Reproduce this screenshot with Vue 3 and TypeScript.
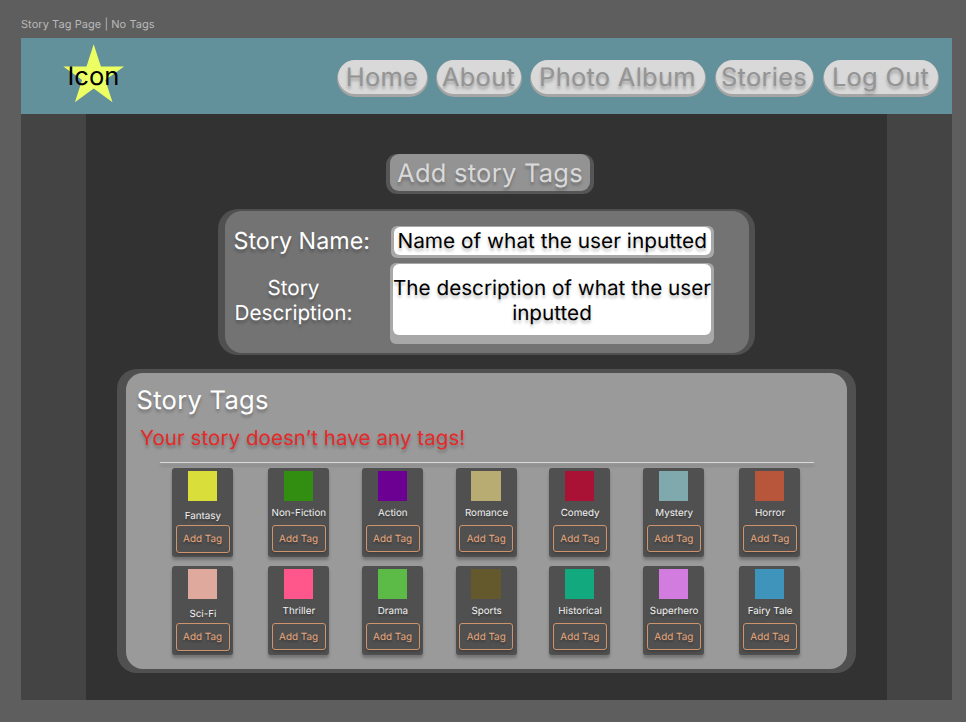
<script setup lang="ts">
interface NavItem {
  label: string
  size: string
}

interface Tag {
  name: string
  color: string
  low?: boolean
}

const navItems: NavItem[] = [
  { label: 'Home', size: 'home' },
  { label: 'About', size: 'about' },
  { label: 'Photo Album', size: 'album' },
  { label: 'Stories', size: 'stories' },
  { label: 'Log Out', size: 'logout' },
]

const tags: Tag[] = [
  { name: 'Fantasy', color: '#d9de3b', low: true },
  { name: 'Non-Fiction', color: '#328e10' },
  { name: 'Action', color: '#6b0093' },
  { name: 'Romance', color: '#b9ac72' },
  { name: 'Comedy', color: '#a91135' },
  { name: 'Mystery', color: '#7fa9ac' },
  { name: 'Horror', color: '#b8563c' },
  { name: 'Sci-Fi', color: '#dfa99d', low: true },
  { name: 'Thriller', color: '#ff568b' },
  { name: 'Drama', color: '#5cba47' },
  { name: 'Sports', color: '#64592c' },
  { name: 'Historical', color: '#12a97f' },
  { name: 'Superhero', color: '#d17cde' },
  { name: 'Fairy Tale', color: '#3e94bb' },
]
</script>

<template>
  <div class="canvas">
    <div class="frame-label">Story Tag Page | No Tags</div>
    <div class="frame">
      <header class="header">
        <div class="logo">
          <svg class="star" viewBox="0 0 64 64" width="64" height="64">
            <polygon
              points="31.7,0.3 38.9,22.4 62.1,22.4 43.3,36.1 50.5,58.2 31.7,44.5 12.9,58.2 20.1,36.1 1.3,22.4 24.5,22.4"
              fill="#ecff63"
            />
          </svg>
          <span class="logo-text">Icon</span>
        </div>
        <nav class="nav">
          <a v-for="item in navItems" :key="item.label" class="pill" :class="item.size">
            <span class="pill-face">{{ item.label }}</span>
          </a>
        </nav>
      </header>

      <main class="content">
        <h1 class="heading"><span class="heading-face">Add story Tags</span></h1>

        <section class="form">
          <div class="form-face">
            <div class="name-label">Story Name:</div>
            <div class="name-box"><div class="name-value">Name of what the user inputted</div></div>
            <div class="desc-label">Story<br />Description:</div>
            <div class="desc-box">
              <div class="desc-value">The description of what the user<br />inputted</div>
            </div>
          </div>
        </section>

        <section class="tags">
          <div class="tags-face">
            <h2 class="tags-title">Story Tags</h2>
            <p class="tags-empty">Your story doesn’t have any tags!</p>
            <div class="rule"></div>
            <div class="tag-grid">
              <div v-for="tag in tags" :key="tag.name" class="tag" :class="{ low: tag.low }">
                <div class="swatch" :style="{ background: tag.color }"></div>
                <div class="tag-name">{{ tag.name }}</div>
                <button class="add">Add Tag</button>
              </div>
            </div>
          </div>
        </section>
      </main>
    </div>
  </div>
</template>

<style>
body {
  margin: 0;
  background: #5e5e5e;
}
</style>

<style scoped>
.canvas {
  box-sizing: border-box;
  width: 966px;
  height: 722px;
  padding: 16px 14px 22px 21px;
  overflow: hidden;
  background: #5e5e5e;
  font-family: Inter, 'Liberation Sans', sans-serif;
  text-rendering: geometricPrecision;
  white-space: nowrap;
}
.frame-label {
  height: 22px;
  font-size: 11px;
  line-height: 16px;
  letter-spacing: 0.06px;
  color: #b9b9b9;
}
.frame {
  width: 931px;
  height: 662px;
  background: #444;
}
.header {
  box-sizing: border-box;
  display: flex;
  justify-content: space-between;
  height: 76px;
  padding: 6px 13.5px 0 40.5px;
  background: #62909b;
}
.logo {
  display: grid;
  width: 64px;
  height: 66px;
}
.star,
.logo-text {
  grid-area: 1 / 1;
}
.logo-text {
  padding-left: 6px;
  font-size: 25.5px;
  line-height: 66px;
  color: #000;
}
.nav {
  display: flex;
  padding-top: 15.5px;
}
.pill {
  box-sizing: border-box;
  height: 37.5px;
  padding: 0.5px 1px 0;
  border-radius: 18.5px;
  background: #a5a5a5;
}
.home { width: 91px; margin-right: 8px; }
.about { width: 86px; margin-right: 8px; }
.album { width: 176px; margin-right: 9px; }
.stories { width: 99px; margin-right: 9px; }
.logout { width: 116px; }
.pill-face {
  display: flex;
  justify-content: center;
  height: 33.5px;
  border-radius: 17px;
  background: #d9d9d9;
  font-size: 25.5px;
  line-height: 36px;
  letter-spacing: 0.25px;
  color: #949494;
  text-shadow: 0 3px 3px rgba(0, 0, 0, 0.25);
}
.content {
  display: flex;
  flex-direction: column;
  width: 801px;
  height: 586px;
  margin-left: 65px;
  background: #323232;
}
.heading {
  box-sizing: border-box;
  width: 208px;
  height: 40px;
  margin: 40px 0 0 300px;
  padding: 0 4px;
  border-radius: 11px;
  background: #565656;
  font-weight: 400;
}
.heading-face {
  display: flex;
  justify-content: center;
  height: 36.5px;
  border-radius: 9px;
  background: #939393;
  font-size: 25.5px;
  line-height: 39px;
  letter-spacing: 0.25px;
  color: #d9d9d9;
  text-shadow: 0 3px 3px rgba(0, 0, 0, 0.25);
}
.form {
  box-sizing: border-box;
  width: 536.5px;
  height: 146px;
  margin: 15px 0 0 132px;
  padding: 2px 6px 2px 6.5px;
  border-radius: 20px;
  background: #505050;
}
.form-face {
  box-sizing: border-box;
  display: grid;
  grid-template-columns: 165.5px 324px;
  grid-template-rows: 37px 81px;
  height: 142px;
  padding-top: 15px;
  border-radius: 17px;
  background: #737373;
  color: #fff;
  text-shadow: 0 3px 3px rgba(0, 0, 0, 0.25);
}
.name-label {
  padding-left: 9px;
  font-size: 23.3px;
  line-height: 30px;
}
.name-box {
  box-sizing: border-box;
  width: 323.5px;
  height: 32px;
  margin-left: 0.5px;
  padding: 0.5px 3px;
  border-radius: 6px;
  background: #a8a8a8;
}
.name-value {
  display: flex;
  justify-content: center;
  height: 28px;
  border-radius: 6px;
  background: #fff;
  font-size: 20.8px;
  line-height: 30px;
  color: #000;
}
.desc-label {
  width: 138px;
  padding-top: 11.5px;
  font-size: 20.7px;
  line-height: 25.5px;
  text-align: center;
}
.desc-box {
  box-sizing: border-box;
  height: 81px;
  padding: 0.5px 3px;
  border-radius: 6px;
  background: #a8a8a8;
}
.desc-value {
  box-sizing: border-box;
  height: 71.5px;
  padding-top: 11px;
  border-radius: 6px;
  background: #fff;
  font-size: 20.7px;
  line-height: 25.5px;
  text-align: center;
  color: #000;
}
.tags {
  box-sizing: border-box;
  width: 739px;
  height: 304px;
  margin: 14px 0 0 31px;
  padding: 4px 9px;
  border-radius: 20px;
  background: #505050;
}
.tags-face {
  box-sizing: border-box;
  height: 296px;
  padding-top: 11.5px;
  border-radius: 17px;
  background: #9a9a9a;
}
.tags-title {
  margin: 0 0 0 10.5px;
  font-size: 25.5px;
  font-weight: 400;
  line-height: 32px;
  letter-spacing: 0.3px;
  color: #fff;
  text-shadow: 0 3px 3px rgba(0, 0, 0, 0.25);
}
.tags-empty {
  margin: 8px 0 0 14px;
  font-size: 20.65px;
  line-height: 26px;
  color: #e42a2a;
  text-shadow: 0 3px 3px rgba(0, 0, 0, 0.25);
}
.rule {
  width: 654px;
  height: 1px;
  margin: 11.5px 0 0 34px;
  background: #d9d9d9;
  box-shadow: 0 3px 3px rgba(0, 0, 0, 0.2);
}
.tag-grid {
  display: grid;
  grid-template-columns: 96px 94px 93.7px 93.6px 94px 96px 61px;
  grid-auto-rows: 88.5px;
  row-gap: 9.3px;
  margin: 5.3px 0 0 46px;
}
.tag {
  box-sizing: border-box;
  display: flex;
  flex-direction: column;
  align-items: center;
  width: 61.1px;
  height: 88.5px;
  padding-top: 3px;
  border-radius: 3px;
  background: #505050;
  box-shadow: 0 3px 3px rgba(0, 0, 0, 0.25);
}
.swatch {
  width: 29.5px;
  height: 29.5px;
  margin-right: 0.4px;
}
.tag-name {
  margin-top: 5.5px;
  padding-left: 0.6px;
  font-size: 9.8px;
  line-height: 15px;
  color: #f2f2f2;
  text-shadow: 0 2px 2px rgba(0, 0, 0, 0.3);
}
.add {
  box-sizing: border-box;
  width: 54px;
  height: 27.5px;
  margin-top: 3.5px;
  padding: 1px 0 0;
  border: 1px solid #cf946b;
  border-radius: 3px;
  background: #505050;
  font-family: inherit;
  font-size: 9.9px;
  line-height: 25px;
  color: #e9a87c;
  text-rendering: inherit;
  text-shadow: 0 2px 2px rgba(0, 0, 0, 0.3);
  box-shadow: 0 2px 3px rgba(0, 0, 0, 0.2);
}
.low .tag-name {
  margin-top: 8.5px;
}
.low .add {
  margin-top: 1.2px;
}
</style>
